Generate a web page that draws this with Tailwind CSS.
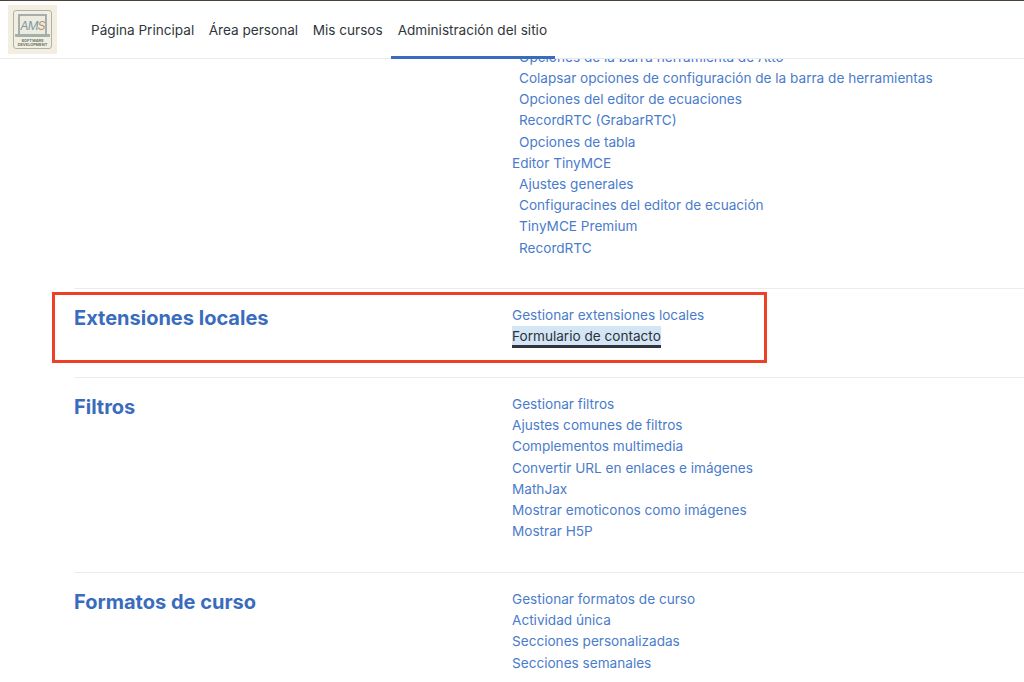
<!DOCTYPE html>
<html lang="es">
<head>
<meta charset="utf-8">
<script src="https://cdn.jsdelivr.net/npm/@tailwindcss/browser@4"></script>
</head>
<body class="w-[1024px] h-[682px] overflow-hidden bg-white font-['Inter','Liberation_Sans',sans-serif] relative">
<header class="relative z-10 h-[59px] bg-white border-t border-t-[#4d433c] border-b border-b-[#e9e9e9] flex items-center pl-[8px]">
  <div class="w-[49px] h-[49px] bg-[#f3eee0] flex items-center justify-center shrink-0 mt-[-1px]">
    <div class="w-[39px] h-[39px] border border-[#a9b5ab] rounded-[3px] flex flex-col items-center pt-[3px]">
      <div class="w-[29px] h-[20px] border-2 border-b-0 border-[#a3b1aa] bg-[#ecebdf] text-[12px] leading-[19px] italic text-[#7f99a3] text-center tracking-[-0.8px]">AM<span class="text-[#c08a78]">S</span></div>
      <div class="w-[35px] h-[3px] bg-[#a3b1aa] rounded-b-[1px]"></div>
      <div class="text-[3.9px] leading-[4px] font-bold text-[#66766f] text-center mt-[2px] whitespace-nowrap">SOFTWARE<br>DEVELOPMENT</div>
    </div>
  </div>
  <nav class="flex h-full ml-[26px] text-[13.6px] text-[#30363c]">
    <a class="flex items-center px-[8px] pt-[2px]">Página Principal</a>
    <a class="flex items-center px-[8px] pt-[2px] ml-[-1.5px]">Área personal</a>
    <a class="flex items-center px-[8px] pt-[2px] ml-[-1.5px]">Mis cursos</a>
    <a class="flex items-center px-[8px] pt-[2px] ml-[-1px] relative">Administración del sitio<span class="absolute left-[1px] right-0 bottom-[-1px] h-[3px] bg-[#3a6cbd]"></span></a>
  </nav>
</header>
<main class="h-[623px] overflow-hidden pl-[74px] text-[13.6px] leading-[21.2px] text-[#4a7ccb]">
  <section class="mt-[-12.3px] pb-[28.9px] pl-[438px]">
    <ul>
      <li class="pl-[7px]">Opciones de la barra herramienta de Atto</li>
      <li class="pl-[7px]">Colapsar opciones de configuración de la barra de herramientas</li>
      <li class="pl-[7px]">Opciones del editor de ecuaciones</li>
      <li class="pl-[7px]">RecordRTC (GrabarRTC)</li>
      <li class="pl-[7px]">Opciones de tabla</li>
      <li>Editor TinyMCE</li>
      <li class="pl-[7px]">Ajustes generales</li>
      <li class="pl-[7px]">Configuracines del editor de ecuación</li>
      <li class="pl-[7px]">TinyMCE Premium</li>
      <li class="pl-[7px]">RecordRTC</li>
    </ul>
  </section>
  <section class="relative border-t border-[#ececec] pt-[16px] pb-[30px] flex">
    <h2 class="w-[438px] text-[20px] leading-[26px] font-bold text-[#3a6cbd]">Extensiones locales</h2>
    <ul>
      <li>Gestionar extensiones locales</li>
      <li><span class="block w-fit h-[22px] mb-[-0.8px] bg-[#d4e5f6] border-b-[3px] border-[#30343c] text-[#2b3138]">Formulario de contacto</span></li>
    </ul>
    <div class="absolute left-[-22px] top-[3px] w-[715px] h-[71px] border-[3px] border-[#ee4027]"></div>
  </section>
  <section class="border-t border-[#ececec] pt-[16px] pb-[30px] flex">
    <h2 class="w-[438px] text-[20px] leading-[26px] font-bold text-[#3a6cbd]">Filtros</h2>
    <ul>
      <li>Gestionar filtros</li>
      <li>Ajustes comunes de filtros</li>
      <li>Complementos multimedia</li>
      <li>Convertir URL en enlaces e imágenes</li>
      <li>MathJax</li>
      <li>Mostrar emoticonos como imágenes</li>
      <li>Mostrar H5P</li>
    </ul>
  </section>
  <section class="border-t border-[#ececec] pt-[15.6px] pb-[30px] flex">
    <h2 class="w-[438px] text-[20px] leading-[26px] font-bold text-[#3a6cbd]">Formatos de curso</h2>
    <ul>
      <li>Gestionar formatos de curso</li>
      <li>Actividad única</li>
      <li>Secciones personalizadas</li>
      <li>Secciones semanales</li>
    </ul>
  </section>
</main>
</body>
</html>
